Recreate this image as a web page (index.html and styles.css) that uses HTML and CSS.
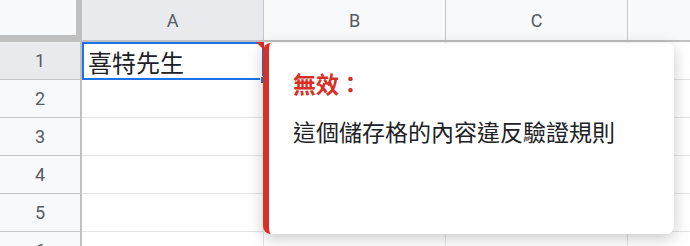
FILE: index.html
```html
<!DOCTYPE html>
<html lang="zh-Hant">
<head>
    <meta charset="UTF-8">
    <meta name="viewport" content="width=device-width, initial-scale=1.0">
    <title>試算表 - 資料驗證</title>
    <link rel="stylesheet" href="styles.css">
</head>
<body>
    <div class="sheet-wrap">
        <div class="sheet">
            <div class="corner"></div>
            <div class="col-head active">A</div>
            <div class="col-head">B</div>
            <div class="col-head">C</div>
            <div class="col-head last"></div>

            <div class="row-head active">1</div>
            <div class="cell selected">
                <span class="cell-text">喜特先生</span>
                <span class="error-mark"></span>
                <span class="fill-handle"></span>
            </div>
            <div class="cell"></div>
            <div class="cell"></div>
            <div class="cell last"></div>

            <div class="row-head">2</div>
            <div class="cell"></div>
            <div class="cell"></div>
            <div class="cell"></div>
            <div class="cell last"></div>

            <div class="row-head">3</div>
            <div class="cell"></div>
            <div class="cell"></div>
            <div class="cell"></div>
            <div class="cell last"></div>

            <div class="row-head">4</div>
            <div class="cell"></div>
            <div class="cell"></div>
            <div class="cell"></div>
            <div class="cell last"></div>

            <div class="row-head">5</div>
            <div class="cell"></div>
            <div class="cell"></div>
            <div class="cell"></div>
            <div class="cell last"></div>

            <div class="row-head">6</div>
            <div class="cell"></div>
            <div class="cell"></div>
            <div class="cell"></div>
            <div class="cell last"></div>
        </div>

        <!-- 驗證錯誤提示 -->
        <div class="validation-popup">
            <div class="popup-title">無效：</div>
            <div class="popup-text">這個儲存格的內容違反驗證規則</div>
        </div>
    </div>
</body>
</html>
```

FILE: styles.css
```css
:root {
    --header-bg: #f8f9fa;
    --header-active: #e8eaed;
    --header-line: #c4c7c5;
    --freeze-line: #c0c0c0;
    --grid-line: #e2e3e3;
    --select-blue: #1a73e8;
    --error-red: #d93025;
    --text-dark: #202124;
    --text-muted: #575a5e;
}

* {
    margin: 0;
    padding: 0;
    box-sizing: border-box;
}

body {
    width: 690px;
    height: 246px;
    overflow: hidden;
    background-color: #ffffff;
    font-family: Roboto, "Noto Sans CJK TC", sans-serif;
}

.sheet-wrap {
    position: relative;
    width: 690px;
    height: 246px;
    overflow: hidden;
}

.sheet {
    display: grid;
    grid-template-columns: 82px 182px 182px 182px 1fr;
    grid-template-rows: 42px repeat(6, 38px);
}

.corner {
    background-color: var(--header-bg);
    border-right: 6px solid var(--freeze-line);
    border-bottom: 7px solid var(--freeze-line);
}

.col-head {
    display: flex;
    align-items: center;
    justify-content: center;
    background-color: var(--header-bg);
    border-right: 1px solid var(--header-line);
    border-bottom: 2px solid var(--freeze-line);
    color: var(--text-muted);
    font-size: 18px;
    padding-top: 1px;
}

.col-head.last {
    border-right: none;
}

.row-head {
    display: flex;
    align-items: center;
    justify-content: center;
    background-color: var(--header-bg);
    border-right: 2px solid var(--freeze-line);
    border-bottom: 1px solid var(--header-line);
    color: var(--text-muted);
    font-size: 18px;
}

.col-head.active,
.row-head.active {
    background-color: var(--header-active);
}

.cell {
    position: relative;
    border-right: 1px solid var(--grid-line);
    border-bottom: 1px solid var(--grid-line);
}

.cell.last {
    border-right: none;
}

.cell.selected {
    border: 2px solid var(--select-blue);
    display: flex;
    align-items: center;
    padding-left: 4px;
}

.cell-text {
    font-family: "Noto Sans CJK TC", sans-serif;
    font-size: 24px;
    color: var(--text-dark);
    line-height: 1;
    margin-top: 2px;
}

.error-mark {
    position: absolute;
    top: -2px;
    right: -2px;
    width: 0;
    height: 0;
    border-top: 8px solid var(--error-red);
    border-left: 8px solid transparent;
}

.fill-handle {
    position: absolute;
    right: -5px;
    bottom: -6px;
    width: 7px;
    height: 8px;
    background-color: var(--select-blue);
    border: 1px solid #ffffff;
}

.validation-popup {
    position: absolute;
    left: 263px;
    top: 43px;
    width: 411px;
    height: 191px;
    background-color: #ffffff;
    border-left: 6px solid var(--error-red);
    border-radius: 8px;
    box-shadow: 0 4px 16px rgba(0, 0, 0, 0.22);
    padding: 25px 24px;
    font-family: "Noto Sans CJK TC", sans-serif;
}

.popup-title {
    color: var(--error-red);
    font-size: 23px;
    font-weight: 700;
    line-height: 30px;
}

.popup-text {
    margin-top: 18px;
    color: var(--text-dark);
    font-size: 23px;
    line-height: 30px;
}
```
